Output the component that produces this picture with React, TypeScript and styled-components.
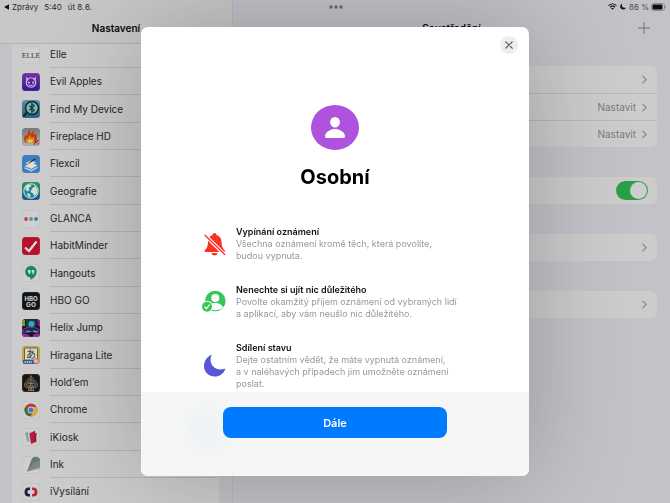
import React, { useState } from "react";
import styled, { createGlobalStyle } from "styled-components";

const GlobalStyle = createGlobalStyle`
  *, *::before, *::after { box-sizing: border-box; }
  body {
    margin: 0;
    background: #c3c2c8;
    font-family: Inter, "Noto Sans CJK JP", sans-serif;
    color: #262628;
  }
  h1, h2, h3, p, ul { margin: 0; padding: 0; }
  ul { list-style: none; }
  button { font-family: inherit; border: 0; padding: 0; margin: 0; background: none; cursor: pointer; }
`;

const Page = styled.div`
  display: grid;
  grid-template-columns: 233px minmax(0, 1fr);
  height: 100vh;
  overflow: hidden;
`;

const StatusBar = styled.header`
  position: absolute;
  top: 0;
  left: 0;
  right: 0;
  z-index: 2;
  display: grid;
  grid-template-columns: 1fr auto 1fr;
  align-items: center;
  height: 13px;
  padding: 0 3px 0 4px;
  font-size: 8px;
  line-height: 12px;
  color: #2a2a2c;
`;

const StatusGroup = styled.div<{ $end?: boolean; $gap: number }>`
  display: flex;
  align-items: center;
  gap: ${(p) => p.$gap}px;
  justify-content: ${(p) => (p.$end ? "flex-end" : "flex-start")};
  white-space: nowrap;
`;

const BackLink = styled.a`
  display: flex;
  align-items: center;
  gap: 3px;
  color: inherit;
  text-decoration: none;
`;

const BatteryLevel = styled.span`
  display: flex;
  align-items: center;
  gap: 2px;
  color: #4b4b4e;
`;

const Sidebar = styled.nav`
  display: flex;
  flex-direction: column;
  min-height: 0;
  border-right: 1px solid #b9b8be;
`;

const PaneHeader = styled.div<{ $bar?: boolean }>`
  position: relative;
  z-index: 1;
  flex: none;
  display: grid;
  grid-template-columns: 1fr auto 1fr;
  align-items: center;
  height: ${(p) => (p.$bar ? 44 : 43)}px;
  padding: 13px 20px 0;
  background: ${(p) => (p.$bar ? "#c8c8c8" : "transparent")};
  border-bottom: ${(p) => (p.$bar ? "1px solid #b2b2b4" : "0")};
`;

const PaneTitle = styled.h2`
  grid-column: 2;
  font-size: 10px;
  line-height: 14px;
  font-weight: 600;
  color: #0b0b0c;
`;

const AddButton = styled.button`
  grid-column: 3;
  justify-self: end;
  display: flex;
  color: #737377;
`;

const AppList = styled.ul`
  margin: -3px 13px 0 12px;
  background: #cccccc;
`;

const AppItem = styled.li`
  height: 27px;

  &:nth-child(3n) {
    height: 28px;
  }
`;

const AppLink = styled.a`
  display: flex;
  align-items: center;
  gap: 10px;
  height: 100%;
  padding-left: 10px;
  color: inherit;
  text-decoration: none;
`;

const AppName = styled.span`
  flex: 1;
  display: flex;
  align-items: center;
  height: 100%;
  border-bottom: 1px solid #b5b5b7;
  font-size: 10px;
  white-space: nowrap;
`;

const Detail = styled.main`
  min-width: 0;
`;

const Groups = styled.div`
  display: flex;
  flex-direction: column;
  gap: 30px;
  padding: 23px 13px 0 12px;
`;

const Card = styled.section`
  overflow: hidden;
  border-radius: 6px;
  background: #cccccc;
`;

const rowHeight = 27;

const RowButton = styled.button`
  display: flex;
  align-items: center;
  justify-content: flex-end;
  gap: 6px;
  width: 100%;
  height: ${rowHeight}px;
  padding-right: 10px;
  font-size: 10px;
  color: #7b7b7e;

  & + & {
    border-top: 1px solid #b7b7ba;
  }
`;

const SwitchRow = styled.label`
  display: flex;
  align-items: center;
  justify-content: flex-end;
  height: ${rowHeight}px;
  padding-right: 9px;
`;

const Switch = styled.input`
  appearance: none;
  display: flex;
  width: 32px;
  height: 19px;
  margin: 0;
  padding: 1px;
  border-radius: 10px;
  background: #a9a9ad;
  cursor: pointer;

  &::before {
    content: "";
    width: 17px;
    height: 17px;
    border-radius: 50%;
    background: #cdcdcd;
  }

  &:checked {
    background: #2b9f47;
    justify-content: flex-end;
  }
`;

const Backdrop = styled.div`
  position: fixed;
  inset: 0;
  z-index: 3;
  display: flex;
  align-items: center;
  justify-content: center;
`;

const Dialog = styled.div`
  display: flex;
  flex-direction: column;
  width: 388px;
  max-width: 100%;
  overflow: hidden;
  border-radius: 7px;
  background: #ffffff;
  box-shadow: 0 0 100px rgba(0, 0, 0, 0.24);
`;

const CloseButton = styled.button`
  align-self: flex-end;
  display: flex;
  align-items: center;
  justify-content: center;
  width: 18px;
  height: 18px;
  margin: 9px 11px 0 0;
  border-radius: 50%;
  background: #eeeeef;
  color: #55555a;
`;

const Intro = styled.div`
  display: flex;
  flex-direction: column;
  align-items: center;
  gap: 14px;
  padding-top: 51px;
`;

const DialogTitle = styled.h1`
  font-size: 20px;
  line-height: 26px;
  font-weight: 700;
  color: #000000;
`;

const Features = styled.ul`
  display: flex;
  flex-direction: column;
  gap: 21px;
  padding: 35px 48px 2px 60px;
`;

const Feature = styled.li`
  display: flex;
  align-items: center;
  gap: 9px;
`;

const FeatureTitle = styled.h3`
  font-size: 9px;
  line-height: 13px;
  font-weight: 600;
  color: #111112;
`;

const FeatureText = styled.p`
  font-size: 9px;
  line-height: 12px;
  color: #98989d;
  white-space: pre-line;
`;

const DialogFooter = styled.footer`
  display: flex;
  justify-content: center;
  padding: 15px 20px 38px;
  background: radial-gradient(circle at 66px 38px, #ecf2f5 0, #f6f6f6 34px);
`;

const PrimaryButton = styled.button`
  width: 224px;
  height: 31px;
  border-radius: 8px;
  background: #007aff;
  color: #ffffff;
  font-size: 11px;
  font-weight: 600;
`;

function Chevron() {
  return (
    <svg width="5" height="9" viewBox="0 0 5 9" fill="none" stroke="#89898c" strokeWidth="1.2" strokeLinecap="round" strokeLinejoin="round">
      <path d="M.7 1.1 4.2 4.5.7 7.9" />
    </svg>
  );
}

const light = "#cfcfcf";

const art: Record<string, React.ReactNode> = {
  elle: (
    <text x="18" y="23" textAnchor="middle" fontFamily="Liberation Serif, serif" fontSize="15" textRendering="geometricPrecision" fill="#3c3c3c">
      ELLE
    </text>
  ),
  evil: (
    <>
      <rect width="36" height="36" fill="url(#evilGrad)" />
      <circle cx="18" cy="19" r="9.500" fill="none" stroke="#c9b5e6" strokeWidth="2.400" />
      <path d="M8.500 7c-1 4 0 7 2 8.500l4-4C11.500 11 9.500 9.500 8.500 7zM27.500 7c1 4 0 7-2 8.500l-4-4c3-.5 5-2 6-4.500z" fill="#c9b5e6" />
      <path d="m12 17 4 2.500-3 1.500zM24 17l-4 2.500 3 1.500z" fill="#d6c8ea" stroke="#d6c8ea" />
      <path d="M13 23.500c3 2.200 7 2.200 10 0" fill="none" stroke="#d6c8ea" strokeWidth="1.800" />
    </>
  ),
  find: (
    <>
      <rect width="36" height="36" fill="url(#findGrad)" />
      <path d="m9 26-6 7" stroke="#152c33" strokeWidth="4.500" strokeLinecap="round" />
      <circle cx="20" cy="16" r="13" fill="#83bd8f" stroke="#13282f" strokeWidth="3.200" />
      <path d="m14.500 11.500 10 9L19.500 25V7l5 4.500-10 9" fill="none" stroke="#0e3f78" strokeWidth="2.600" />
    </>
  ),
  fire: (
    <>
      <rect width="36" height="36" fill="url(#greyGrad)" />
      <path d="M6 29C3 20 5 17 7 12c1 3 2 4 3 5 1-5 1-9 5-14 0 5 2 7 4 9 1-3 2-4 4-7 0 5 1 7 3 9l2-3c2 6 3 12-1 18z" fill="#bd3c14" />
      <path d="M8 29c-1-5 0-7 1-9l3 3c1-4 2-7 4-10 1 4 2 6 4 8l3-5c1 5 3 8 1 13z" fill="#dd8a16" />
      <path d="M12 29c-1-3 1-5 2-7l3 3 3-3c1 3 2 5 0 7z" fill="#e6cf4c" />
      <path d="m24 33 9-9M26 26l2 1M31 31l2 1" stroke="#a3242b" strokeWidth="3" strokeDasharray="3 1" />
    </>
  ),
  flexcil: (
    <>
      <rect width="36" height="36" fill="#3a7fc0" />
      <path d="m5 22 13-6 13 4-12 8z" fill="#dedede" />
      <path d="m5 24 14 6 12-7v3l-12 7-14-6z" fill="#c9d1d8" />
      <path d="m7 16 11-5 10 4-11 5z" fill="#e4e4e4" />
      <path d="m14 16 12-8" stroke="#252a30" strokeWidth="2.600" strokeLinecap="round" />
      <path d="m13 17 5-3.500" stroke="#be8b46" strokeWidth="3" />
    </>
  ),
  geo: (
    <>
      <rect width="36" height="36" fill="url(#geoGrad)" />
      <circle cx="18" cy="18" r="14.500" fill="#1d8694" stroke="#cbd8d5" strokeWidth="2.200" />
      <path d="M7 9c4-4 9-5 12-3l-2 4-4 2 2 4-3 3-5-3zM20 13l6-5 5 7-1 8-5 6-3-6-5-3zM10 22l6 2 1 7c-4-1-7-4-7-9z" fill="#d2ddd9" />
    </>
  ),
  glanca: (
    <>
      <circle cx="8" cy="18" r="3.800" fill="#bf3e60" />
      <circle cx="18" cy="18" r="3.800" fill="#83848a" />
      <circle cx="28" cy="18" r="3.800" fill="#20859a" />
    </>
  ),
  habit: (
    <>
      <rect width="36" height="36" fill="#b90f2c" />
      <path d="m6 21 8 7L29 9" fill="none" stroke="#dadada" strokeWidth="4.500" />
    </>
  ),
  hangouts: (
    <>
      <path d="M18 4C11 4 6.500 9 6.500 15.500 6.500 22 11 26.500 17 26.800V32c6-3 12.500-9 12.500-16.500C29.500 9 25 4 18 4z" fill="#168a58" />
      <path d="M12 12h5v5l-2 3.500h-2l1.200-3.500H12zM19.500 12h5v5l-2 3.500h-2l1.200-3.500h-2.200z" fill="#d6dcd8" />
    </>
  ),
  hbo: (
    <>
      <rect width="36" height="36" fill="#131415" />
      <g fontFamily="Inter, sans-serif" fontWeight="800" textAnchor="middle" fill="#c6c6c6">
        <text x="18" y="17" fontSize="12">HBO</text>
        <text x="18" y="29" fontSize="13">GO</text>
      </g>
    </>
  ),
  helix: (
    <>
      <rect width="36" height="36" fill="#17162b" />
      <path d="M0 2h6v12H0z" fill="#829b28" />
      <path d="M8 2h20v14H8z" fill="#153c51" />
      <circle cx="19" cy="10" r="6" fill="#32acab" />
      <path d="M2 21c9-6 23-6 32 0l-2 7c-9-4-20-4-29 0z" fill="#282348" stroke="#822b98" strokeWidth="2" />
      <path d="M8 25h9M22 24l9 2" stroke="#2cb1b1" strokeWidth="3" />
      <path d="m2 29 10 2 5 5H2zM34 29l-10 1-3 6h13z" fill="#a51f9a" />
      <path d="M30 2h6v12h-4z" fill="#821f82" />
    </>
  ),
  hiragana: (
    <>
      <rect width="36" height="36" fill="#c6ad2f" />
      <rect x="5" y="4" width="26" height="24" rx="2" fill="#d9d9d2" stroke="#403f38" strokeWidth="1.500" />
      <text x="18" y="24" textAnchor="middle" fontSize="20" fontFamily="Noto Sans CJK JP, sans-serif" fill="#33332f">あ</text>
      <path d="M2 28h25v8H2z" fill="#31569d" />
      <path d="M5 32h16" stroke="#c7ccd5" strokeWidth="3" strokeDasharray="3 1" />
      <circle cx="28" cy="30" r="5" fill="#d5c3be" stroke="#c26f65" strokeWidth="2" />
    </>
  ),
  holdem: (
    <>
      <rect width="36" height="36" fill="#181716" />
      <path d="M18 3c3 8 13 12 13 20 0 4-6 6-10 3l3 7H12l3-7c-4 3-10 1-10-3C5 15 15 11 18 3z" fill="#322c28" stroke="#8c7a6a" strokeWidth="1.800" />
      <path d="M18 9c2 6 9 10 9 14 0 2-4 2-6 0l-3 9-3-9c-2 2-6 2-6 0 0-4 7-8 9-14z" fill="none" stroke="#9b8876" strokeWidth="1.500" />
      <path d="M18 14v14M13 19h10" stroke="#a69482" strokeWidth="1.500" />
    </>
  ),
  chrome: (
    <>
      <circle cx="18" cy="18" r="13" fill="#bd3a2e" />
      <path d="M6.800 11.500 13 22l5.500 3-5 5.200C7 28 2.500 19.500 6.800 11.500z" fill="#237e42" />
      <path d="M18 11.800h11.500C34 20 28.500 31.500 17 31l6.500-10z" fill="#d5aa27" />
      <circle cx="18" cy="18" r="6.800" fill="#d0d0d0" />
      <circle cx="18" cy="18" r="5" fill="#3d78c4" />
    </>
  ),
  kiosk: (
    <>
      <path d="m6 10 6-3 3 22-5-3z" fill="#8aa5a8" />
      <path d="m12 8 7-2v24l-5-4z" fill="#c0c4c4" />
      <path d="m15 11 11-6 3 22-11 5z" fill="#b41b3d" />
      <path d="m26 11 3-2-1 19-4 1z" fill="#971431" />
    </>
  ),
  ink: (
    <>
      <path d="M10 31 20 5c5-6 12-4 16 1v18z" fill="#68747a" />
      <path d="m10 31 13-17 13-5v13z" fill="#7b868a" />
      <path d="m10 31 26-9v4z" fill="#a2abae" />
    </>
  ),
  ct: (
    <>
      <path d="M16 9h-3c-5 0-8 3-8 9s3 9 8 9h3v-5c-4 0-5-1-5-4s1-4 5-4z" fill="#182342" />
      <path d="M20 9h3c5 0 8 3 8 9s-3 9-8 9h-3v-5c4 0 5-1 5-4s-1-4-5-4z" fill="#bb2433" />
    </>
  ),
};

const apps = [
  { id: "elle", name: "Elle" },
  { id: "evil", name: "Evil Apples" },
  { id: "find", name: "Find My Device" },
  { id: "fire", name: "Fireplace HD" },
  { id: "flexcil", name: "Flexcil" },
  { id: "geo", name: "Geografie" },
  { id: "glanca", name: "GLANCA" },
  { id: "habit", name: "HabitMinder" },
  { id: "hangouts", name: "Hangouts" },
  { id: "hbo", name: "HBO GO" },
  { id: "helix", name: "Helix Jump" },
  { id: "hiragana", name: "Hiragana Lite" },
  { id: "holdem", name: "Hold’em" },
  { id: "chrome", name: "Chrome" },
  { id: "kiosk", name: "iKiosk" },
  { id: "ink", name: "Ink" },
  { id: "ct", name: "iVysílání" },
];

function AppIcon({ id }: { id: string }) {
  return (
    <svg width="18" height="18" viewBox="0 0 36 36" aria-hidden="true">
      <defs>
        <clipPath id={`clip-${id}`}>
          <rect width="36" height="36" rx="7" />
        </clipPath>
        <linearGradient id="evilGrad" x1="0" y1="0" x2="0" y2="1">
          <stop stopColor="#7930a8" />
          <stop offset="1" stopColor="#2d1a8b" />
        </linearGradient>
        <linearGradient id="findGrad" x1="0" y1="0" x2="0" y2="1">
          <stop stopColor="#5791b8" />
          <stop offset="1" stopColor="#235e8d" />
        </linearGradient>
        <linearGradient id="greyGrad" x1="0" y1="0" x2="0" y2="1">
          <stop stopColor="#77777a" />
          <stop offset="1" stopColor="#b2b2b4" />
        </linearGradient>
        <linearGradient id="geoGrad" x1="0" y1="0" x2="0" y2="1">
          <stop stopColor="#239a4b" />
          <stop offset="1" stopColor="#164f9b" />
        </linearGradient>
      </defs>
      <g clipPath={`url(#clip-${id})`}>
        <rect width="36" height="36" fill={light} />
        {art[id]}
      </g>
      <rect x=".5" y=".5" width="35" height="35" rx="7" fill="none" stroke="#8e8e92" strokeOpacity=".4" />
    </svg>
  );
}

function BellOff() {
  return (
    <svg width="26" height="26" viewBox="0 0 26 26" aria-hidden="true">
      <path d="M13.500 2c1.200 0 1.900.8 2 1.900 3.300.9 4.900 3.400 5 6.800.1 4.300.9 6.300 3 8.300.9.900.5 2-.8 2H4.800c-1.300 0-1.700-1.100-.8-2 2.100-2 2.900-4 3-8.300.1-3.400 1.300-5.900 4.600-6.800.1-1.100.7-1.900 1.900-1.900z" fill="#fc3126" />
      <path d="M10.400 22h6.300c-.4 1.600-1.600 2.500-3.200 2.500s-2.800-.9-3.100-2.500z" fill="#fc3126" />
      <path d="M4 4.200 23.500 23.500" stroke="#fff" strokeWidth="3.600" />
      <path d="M4 4.200 23.700 23.500" stroke="#fc3126" strokeWidth="1.300" strokeLinecap="round" />
    </svg>
  );
}

function PersonCheck() {
  return (
    <svg width="26" height="26" viewBox="0 0 26 26" aria-hidden="true">
      <circle cx="14.300" cy="12" r="10.300" fill="#35c759" />
      <circle cx="14.300" cy="9" r="4" fill="#fff" />
      <path d="M6.500 18.500c.9-2.700 4.200-4.500 7.800-4.500s6.900 1.800 7.800 4.500c-2 1.900-4.700 2.700-7.800 2.700s-5.800-.8-7.800-2.700z" fill="#fff" />
      <circle cx="6" cy="17.700" r="6" fill="#fff" />
      <circle cx="6" cy="17.700" r="5" fill="#35c759" />
      <path d="m3.800 18 1.600 1.800 2.900-4" fill="none" stroke="#fff" strokeWidth="1.200" strokeLinecap="round" strokeLinejoin="round" />
    </svg>
  );
}

function Moon() {
  return (
    <svg width="26" height="26" viewBox="0 0 26 26" aria-hidden="true">
      <path d="M10.500 2.300C9 5.700 9.200 10 11.700 13c2.700 3.200 7.500 4.200 11.700 2.700.7-.2 1 .1.700.7-1.700 4.300-5.500 7-10.300 7C7.800 23.400 3 19 3 13.200 3 8.400 5.700 4.100 9.800 2c.7-.4 1-.2.700.3z" fill="#5856d6" />
    </svg>
  );
}

const features = [
  {
    icon: <BellOff />,
    title: "Vypínání oznámení",
    text: "Všechna oznámení kromě těch, která povolíte,\nbudou vypnuta.",
  },
  {
    icon: <PersonCheck />,
    title: "Nenechte si ujít nic důležitého",
    text: "Povolte okamžitý příjem oznámení od vybraných lidí\na aplikací, aby vám neušlo nic důležitého.",
  },
  {
    icon: <Moon />,
    title: "Sdílení stavu",
    text: "Dejte ostatním vědět, že máte vypnutá oznámení,\na v naléhavých případech jim umožněte oznámení\nposlat.",
  },
];

export default function App() {
  const [shared, setShared] = useState(true);

  return (
    <>
      <GlobalStyle />
      <StatusBar>
        <StatusGroup $gap={6}>
          <BackLink href="#zpravy">
            <svg width="5" height="6" viewBox="0 0 5 6" aria-hidden="true">
              <path d="M0 3 5 .3v5.400z" fill="#111" />
            </svg>
            Zprávy
          </BackLink>
          <span>5:40</span>
          <span>út 8.{"\u200a"}6.</span>
        </StatusGroup>
        <svg width="14" height="4" viewBox="0 0 14 4" fill="#68696c" aria-hidden="true">
          <circle cx="2" cy="2" r="1.700" />
          <circle cx="7" cy="2" r="1.700" />
          <circle cx="12" cy="2" r="1.700" />
        </svg>
        <StatusGroup $end $gap={3}>
          <svg width="9" height="7" viewBox="0 0 18 14" fill="none" stroke="#161617" strokeWidth="2.400" aria-hidden="true">
            <path d="M1 5.200c4.600-4.300 11.400-4.300 16 0M4.200 8.600c2.900-2.600 6.700-2.600 9.600 0" />
            <path d="M9 13.500 6.300 10.800c1.600-1.300 3.800-1.300 5.400 0z" fill="#161617" stroke="none" />
          </svg>
          <svg width="6" height="7" viewBox="0 0 12 14" aria-hidden="true">
            <path d="M4.300 1C2 6 6 11 11.800 9.400 10.500 12 8.500 13.200 6.200 13.200 2.800 13.200.3 10.600.3 7.200.3 4.500 1.800 2 4.300 1z" fill="#161617" />
          </svg>
          <BatteryLevel>
            86 %
            <svg width="16" height="8" viewBox="0 0 16 8" aria-hidden="true">
              <rect x=".5" y=".5" width="13" height="7" rx="2" fill="none" stroke="#88888c" />
              <rect x="1.500" y="1.500" width="10" height="5" rx="1" fill="#0c0c0d" />
              <path d="M14.500 2.800c1 .3 1 2.100 0 2.400z" fill="#77777b" />
            </svg>
          </BatteryLevel>
        </StatusGroup>
      </StatusBar>

      <Page>
        <Sidebar>
          <PaneHeader $bar>
            <PaneTitle>Nastavení</PaneTitle>
          </PaneHeader>
          <AppList>
            {apps.map((app) => (
              <AppItem key={app.id}>
                <AppLink href={`#${app.id}`}>
                  <AppIcon id={app.id} />
                  <AppName>{app.name}</AppName>
                </AppLink>
              </AppItem>
            ))}
          </AppList>
        </Sidebar>

        <Detail>
          <PaneHeader>
            <PaneTitle>Soustředění</PaneTitle>
            <AddButton aria-label="Přidat">
              <svg width="12" height="12" viewBox="0 0 12 12" stroke="currentColor" strokeWidth="1">
                <path d="M6 0v12M0 6h12" />
              </svg>
            </AddButton>
          </PaneHeader>
          <Groups>
            <Card>
              <RowButton aria-label="Nerušit">
                <Chevron />
              </RowButton>
              <RowButton>
                Nastavit
                <Chevron />
              </RowButton>
              <RowButton>
                Nastavit
                <Chevron />
              </RowButton>
            </Card>
            <Card>
              <SwitchRow>
                <Switch
                  type="checkbox"
                  role="switch"
                  aria-label="Sdílet mezi zařízeními"
                  checked={shared}
                  onChange={(e) => setShared(e.target.checked)}
                />
              </SwitchRow>
            </Card>
            <Card>
              <RowButton aria-label="Stav soustředění">
                <Chevron />
              </RowButton>
            </Card>
            <Card>
              <RowButton aria-label="Telefonní hovory">
                <Chevron />
              </RowButton>
            </Card>
          </Groups>
        </Detail>
      </Page>

      <Backdrop>
        <Dialog role="dialog" aria-modal="true" aria-labelledby="dialog-title">
          <CloseButton aria-label="Zavřít">
            <svg width="8" height="8" viewBox="0 0 8 8" stroke="currentColor" strokeWidth="1.200" strokeLinecap="round">
              <path d="m.8.8 6.400 6.400M7.200.8.8 7.200" />
            </svg>
          </CloseButton>
          <Intro>
            <svg width="48" height="45" viewBox="0 0 48 45" aria-hidden="true">
              <ellipse cx="24" cy="22.500" rx="24" ry="22.500" fill="#af52de" />
              <ellipse cx="24" cy="17.200" rx="4.900" ry="5.300" fill="#fff" />
              <path d="M14 31.600c0-4 4.500-7.700 10-7.700s10 3.700 10 7.700c0 .9-.5 1.400-1.400 1.400H15.400c-.9 0-1.400-.5-1.400-1.400z" fill="#fff" />
            </svg>
            <DialogTitle id="dialog-title">Osobní</DialogTitle>
          </Intro>
          <Features>
            {features.map((f) => (
              <Feature key={f.title}>
                {f.icon}
                <div>
                  <FeatureTitle>{f.title}</FeatureTitle>
                  <FeatureText>{f.text}</FeatureText>
                </div>
              </Feature>
            ))}
          </Features>
          <DialogFooter>
            <PrimaryButton>Dále</PrimaryButton>
          </DialogFooter>
        </Dialog>
      </Backdrop>
    </>
  );
}
